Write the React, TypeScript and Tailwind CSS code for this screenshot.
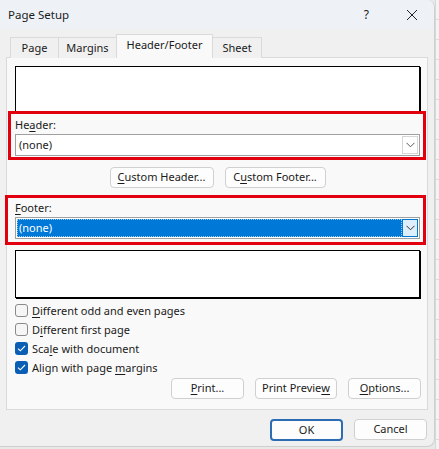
import React from "react";

const font = { fontFamily: '"Noto Sans", "Open Sans", Arial, sans-serif' };

function U({ children }: { children: React.ReactNode }) {
  return <span className="underline underline-offset-[2px] decoration-[1px]">{children}</span>;
}

function Chevron({ color = "#5a5a5a" }: { color?: string }) {
  return (
    <svg width="9" height="6" viewBox="0 0 9 6" fill="none">
      <path d="M0.5 0.8 L4.5 4.8 L8.5 0.8" stroke={color} strokeWidth="1" />
    </svg>
  );
}

function Btn({ w, children, def }: { w: string; children: React.ReactNode; def?: boolean }) {
  return (
    <div
      className={
        "flex items-center justify-center rounded-[4px] bg-[#fdfdfd] text-[11px] text-[#1b1b1b] " +
        w +
        (def ? " border-2 border-[#2b6cb3] h-[22px]" : " border border-[#d0d0d0] h-[21px]")
      }
    >
      {children}
    </div>
  );
}

function Check({ checked, children }: { checked?: boolean; children: React.ReactNode }) {
  return (
    <div className="flex items-center h-[19px] pl-[8px]">
      {checked ? (
        <div className="w-[13px] h-[13px] rounded-[3px] bg-[#0a5fb4] flex items-center justify-center">
          <svg width="9" height="7" viewBox="0 0 9 7" fill="none">
            <path d="M1 3.6 L3.3 5.8 L8 1" stroke="#ffffff" strokeWidth="1.1" />
          </svg>
        </div>
      ) : (
        <div className="w-[13px] h-[13px] rounded-[3px] border border-[#8a8a8a] bg-[#f6f6f6]" />
      )}
      <span className="ml-[4px] text-[11px] text-[#1b1b1b] leading-[16px]">{children}</span>
    </div>
  );
}

export default function App() {
  return (
    <div className="relative w-[439px] h-[449px] flex bg-[#e8e8e8] overflow-hidden" style={font}>
      <div className="w-[435px] h-[447px] rounded-tr-[8px] rounded-br-[8px] bg-[#f0f0f0] border-r border-b border-[#cfcfcf] flex flex-col overflow-hidden">
        {/* title bar */}
        <div className="h-[29px] bg-[#eef2f7] flex items-center pl-[8px] text-[11.5px] text-[#1b1b1b]">
          <span>Page Setup</span>
          <span className="ml-auto mr-[37px] text-[12px]">?</span>
          <svg width="12" height="12" viewBox="0 0 12 12" className="mr-[16px]">
            <path d="M1 1 L11 11 M11 1 L1 11" stroke="#222" strokeWidth="1" />
          </svg>
        </div>
        {/* body */}
        <div className="flex flex-col px-[6px] pt-[6px]">
          {/* tabs */}
          <div className="flex items-end h-[23px] pl-[4px] relative z-10 -mb-px">
            <div className="w-[49px] h-[21px] border border-b-0 border-[#dadada] bg-[#f0f0f0] flex items-center justify-center text-[11px] text-[#1b1b1b]">
              Page
            </div>
            <div className="-ml-px w-[59px] h-[21px] border border-b-0 border-[#dadada] bg-[#f0f0f0] flex items-center justify-center text-[11px] text-[#1b1b1b]">
              Margins
            </div>
            <div className="-ml-px w-[97px] h-[24px] border border-b-0 border-[#dadada] bg-[#f9f9f9] flex items-center justify-center text-[11px] text-[#1b1b1b] pb-[2px]">
              Header/Footer
            </div>
            <div className="-ml-px w-[50px] h-[21px] border border-b-0 border-[#dadada] bg-[#f0f0f0] flex items-center justify-center text-[11px] text-[#1b1b1b]">
              Sheet
            </div>
          </div>
          {/* panel */}
          <div className="h-[353px] border border-[#dadada] bg-[#f9f9f9] flex flex-col pt-[8px]">
            <div className="ml-[8px] w-[405px] h-[47px] bg-white border border-black shadow-[1px_1px_0_#000]" />
            <div className="ml-[8px] mt-[4px] h-[16px] leading-[16px] text-[11px] text-[#1b1b1b]">
              He<U>a</U>der:
            </div>
            <div className="ml-[8px] mt-[1px] w-[405px] h-[22px] bg-white border border-[#a0a0a0] flex items-center">
              <span className="ml-[3px] text-[11px] text-[#1b1b1b]">(none)</span>
              <div className="ml-auto mr-[1px] w-[16px] h-[18px] border border-[#d6d6d6] bg-white flex items-center justify-center">
                <Chevron />
              </div>
            </div>
            <div className="mt-[11px] flex justify-center gap-[11px] pl-[1px]">
              <Btn w="w-[104px]">
                <U>C</U>ustom Header...
              </Btn>
              <Btn w="w-[101px]">
                C<U>u</U>stom Footer...
              </Btn>
            </div>
            <div className="ml-[8px] mt-[12px] h-[16px] leading-[16px] text-[11px] text-[#1b1b1b]">
              <U>F</U>ooter:
            </div>
            <div className="ml-[8px] mt-[1px] w-[405px] h-[22px] bg-white border border-[#a0a0a0] flex items-center">
              <div className="ml-[1px] w-[385px] h-[18px] bg-[#0078d7] border border-dotted border-[#9cc8ee] flex items-center">
                <span className="ml-[1px] text-[11px] text-white">(none)</span>
              </div>
              <div className="ml-auto mr-[1px] w-[16px] h-[18px] border border-[#0078d4] bg-[#dfeefb] flex items-center justify-center">
                <Chevron color="#333" />
              </div>
            </div>
            <div className="ml-[8px] mt-[11px] w-[405px] h-[48px] bg-white border border-black shadow-[1px_1px_0_#000]" />
            <div className="mt-[3px] flex flex-col">
              <Check>
                <U>D</U>ifferent odd and even pages
              </Check>
              <Check>
                D<U>i</U>fferent first page
              </Check>
              <Check checked>
                Sca<U>l</U>e with document
              </Check>
              <Check checked>
                Align with page <U>m</U>argins
              </Check>
            </div>
            <div className="mt-[1px] flex justify-end gap-[11px] pr-[6px]">
              <Btn w="w-[73px]">
                <U>P</U>rint...
              </Btn>
              <Btn w="w-[82px]">
                Print Previe<U>w</U>
              </Btn>
              <Btn w="w-[73px]">
                <U>O</U>ptions...
              </Btn>
            </div>
          </div>
          {/* bottom buttons */}
          <div className="mt-[9px] flex justify-end gap-[11px] pr-[1px]">
            <Btn w="w-[73px]" def>
              OK
            </Btn>
            <Btn w="w-[73px]">Cancel</Btn>
          </div>
        </div>
      </div>
      {/* background strip (spreadsheet behind) */}
      <div className="flex-1 h-full bg-[#f3f3f3] border-l border-[#d8d8d8] bg-[repeating-linear-gradient(to_bottom,transparent_0px,transparent_19px,#dcdcdc_19px,#dcdcdc_20px)]" />

      {/* red annotation boxes */}
      <div className="absolute left-[8px] top-[111px] w-[418px] h-[49px] border-[3px] border-[#e3000e]" />
      <div className="absolute left-[5px] top-[195px] w-[421px] h-[50px] border-[3px] border-[#e3000e]" />
    </div>
  );
}
